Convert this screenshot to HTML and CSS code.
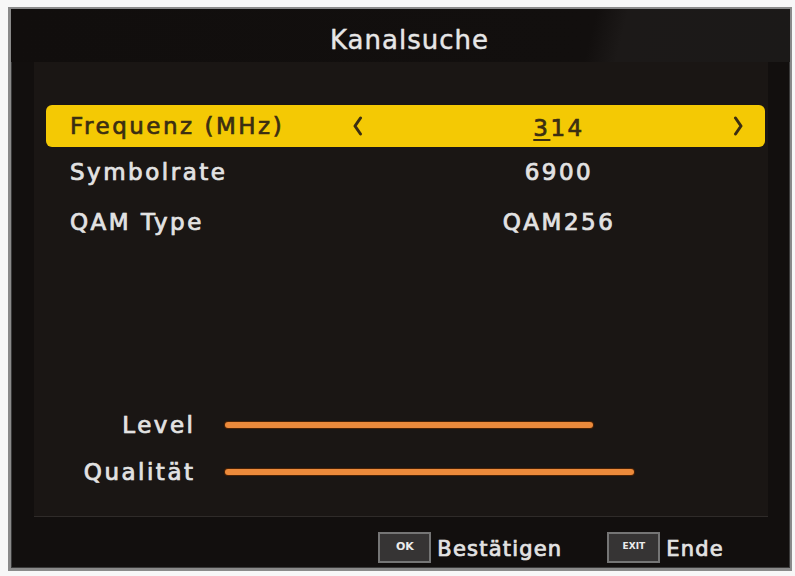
FILE: index.html
```html
<!DOCTYPE html>
<html lang="de">
<head>
<meta charset="utf-8">
<title>Kanalsuche</title>
<link rel="stylesheet" href="styles.css">
</head>
<body>
<div class="screen">
  <div class="header"><span class="title">Kanalsuche</span></div>
  <div class="panel">
    <div class="row active">
      <span class="label">Frequenz (MHz)</span>
      <span class="arrow"><svg width="11" height="20" viewBox="0 0 11 20"><polyline points="8.5,2 3,10 8.5,18" fill="none" stroke="#3b2e12" stroke-width="3" stroke-linecap="round" stroke-linejoin="round"/></svg></span>
      <span class="value"><span class="cursor">3</span>14</span>
      <span class="arrow"><svg width="11" height="20" viewBox="0 0 11 20"><polyline points="2.5,2 8,10 2.5,18" fill="none" stroke="#3b2e12" stroke-width="3" stroke-linecap="round" stroke-linejoin="round"/></svg></span>
    </div>
    <div class="row">
      <span class="label">Symbolrate</span>
      <span class="arrow"></span>
      <span class="value">6900</span>
      <span class="arrow"></span>
    </div>
    <div class="row">
      <span class="label">QAM Type</span>
      <span class="arrow"></span>
      <span class="value">QAM256</span>
      <span class="arrow"></span>
    </div>
    <div class="meters">
      <div class="meter">
        <span class="mlabel">Level</span>
        <span class="track"><span class="bar" style="width:368px"></span></span>
      </div>
      <div class="meter">
        <span class="mlabel">Qualität</span>
        <span class="track"><span class="bar" style="width:409px"></span></span>
      </div>
    </div>
  </div>
  <div class="footer">
    <span class="key">OK</span><span class="ktext">Bestätigen</span>
    <span class="key key-exit">EXIT</span><span class="ktext">Ende</span>
  </div>
</div>
</body>
</html>
```
FILE: styles.css
```css
html, body {
  margin: 0;
  padding: 0;
  background: #f7f7f7;
}
body {
  width: 795px;
  height: 576px;
  overflow: hidden;
  font-family: "DejaVu Sans", "Liberation Sans", sans-serif;
}
.screen {
  margin: 7px 3px 5px 8px;
  width: 784px;
  height: 564px;
  box-sizing: border-box;
  border: 2px solid #8a8a8a;
  border-left-width: 3px;
  border-bottom-width: 3px;
  background: #120f0e;
  display: flex;
  flex-direction: column;
  box-shadow: inset 1px 1px 0 #3a3a3a, inset -1px -1px 0 #3a3a3a;
}
.header {
  height: 53px;
  box-sizing: border-box;
  padding: 16px 0 0 18px;
  text-align: center;
  background: linear-gradient(104deg, #110e0d 0%, #120f0e 74%, #1c1918 78%, #1b1918 100%);
}
.title {
  font-size: 26px;
  line-height: 30px;
  letter-spacing: 1px;
  color: #e6e6e6;
  -webkit-text-stroke: 0.3px #e6e6e6;
  text-shadow: 0 0 1px rgba(255,255,255,0.4);
}
.panel {
  margin: 0 22px 0 23px;
  height: 455px;
  box-sizing: border-box;
  padding: 43px 3px 0 12px;
  background: #1a1614;
  border-bottom: 1px solid #2f2b29;
  display: flex;
  flex-direction: column;
}
.row {
  height: 50px;
  display: grid;
  grid-template-columns: 306px 24px 1fr 24px;
  padding-right: 8px;
  align-items: center;
  font-size: 23px;
  letter-spacing: 2.5px;
  color: #e2e2e2;
  -webkit-text-stroke: 0.7px #e2e2e2;
  text-shadow: 0 0 1px rgba(255,255,255,0.35);
}
.row.active {
  height: 42px;
  background: #f4c904;
  border-radius: 6px;
  color: #3b2e12;
  -webkit-text-stroke: 0.7px #3b2e12;
  text-shadow: none;
}
.label {
  padding-left: 24px;
  white-space: nowrap;
}
.arrow {
  display: flex;
  align-items: center;
}
.arrow svg {
  display: block;
}
.value {
  text-align: center;
  padding-left: 9px;
}
.row.active .value {
  padding-top: 3px;
}
.cursor {
  text-decoration: underline;
  text-decoration-thickness: 2px;
  text-underline-offset: 3px;
}
.meters {
  margin-top: 160px;
  display: flex;
  flex-direction: column;
  gap: 11px;
}
.meter {
  height: 36px;
  display: grid;
  grid-template-columns: 147px 1fr;
  column-gap: 32px;
  align-items: center;
}
.mlabel {
  text-align: right;
  font-size: 23px;
  letter-spacing: 2.5px;
  margin-right: -2.5px;
  color: #e2e2e2;
  -webkit-text-stroke: 0.7px #e2e2e2;
  text-shadow: 0 0 1px rgba(255,255,255,0.35);
}
.track {
  display: flex;
  align-items: center;
}
.bar {
  display: block;
  height: 6px;
  border-radius: 3px;
  background: #ec8a3b;
  box-shadow: 0 0 0 1px #4a2205;
}
.footer {
  flex: 1;
  display: flex;
  justify-content: flex-end;
  align-items: flex-start;
  padding: 15px 66px 0 0;
  box-sizing: border-box;
}
.key {
  width: 53px;
  height: 31px;
  box-sizing: border-box;
  border: 2px solid #757575;
  background: #363434;
  color: #ececec;
  font-size: 11px;
  font-weight: bold;
  line-height: 25px;
  text-align: center;
  padding-bottom: 2px;
}
.key-exit {
  margin-left: 45px;
  font-size: 9px;
}
.ktext {
  margin-left: 6px;
  font-size: 21px;
  letter-spacing: 1.2px;
  color: #e2e2e2;
  line-height: 34px;
  -webkit-text-stroke: 0.7px #e2e2e2;
  text-shadow: 0 0 1px rgba(255,255,255,0.35);
}
```
